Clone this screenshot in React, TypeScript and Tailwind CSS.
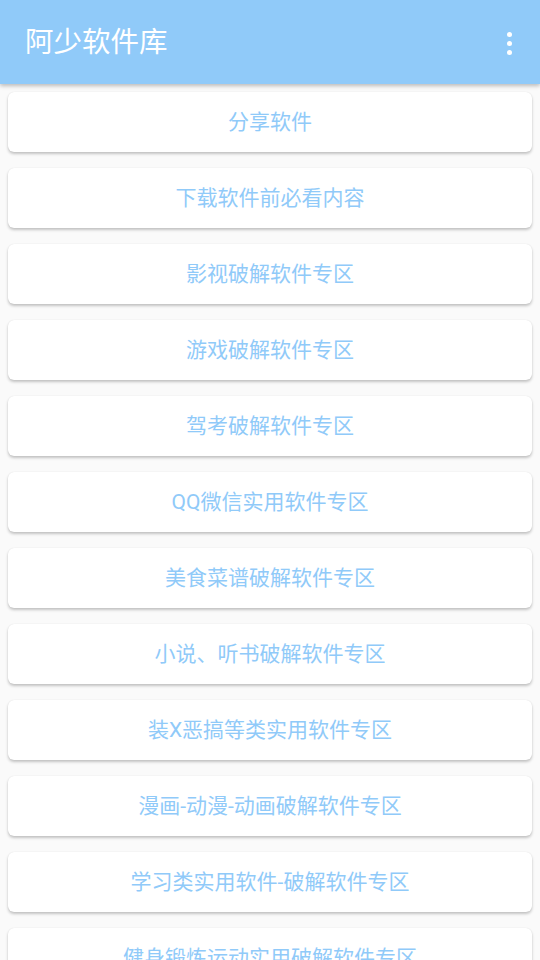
const ITEMS = [
  '分享软件',
  '下载软件前必看内容',
  '影视破解软件专区',
  '游戏破解软件专区',
  '驾考破解软件专区',
  'QQ微信实用软件专区',
  '美食菜谱破解软件专区',
  '小说、听书破解软件专区',
  '装X恶搞等类实用软件专区',
  '漫画-动漫-动画破解软件专区',
  '学习类实用软件-破解软件专区',
  '健身锻炼运动实用破解软件专区',
];

const FONT = "font-['Roboto','Noto_Sans_CJK_SC',sans-serif]";

export default function App() {
  return (
    <div className={`h-[960px] overflow-hidden bg-[#fafafa] ${FONT}`}>
      <header className="relative z-10 flex h-[84px] items-center justify-between bg-[#90caf9] pl-[25px] pr-[28px] pt-[2px] shadow-[0_2px_4px_rgba(0,0,0,0.25)]">
        <h1 className="text-[28.5px] leading-none text-white">阿少软件库</h1>
        <div className="flex flex-col items-center gap-[4px]">
          <span className="h-[5px] w-[5px] rounded-full bg-white" />
          <span className="h-[5px] w-[5px] rounded-full bg-white" />
          <span className="h-[5px] w-[5px] rounded-full bg-white" />
        </div>
      </header>
      <main className="flex flex-col gap-[16px] px-[8px] pt-[8px]">
        {ITEMS.map((item) => (
          <button
            key={item}
            type="button"
            className="flex h-[60px] shrink-0 items-center justify-center rounded-[6px] bg-white pt-[2px] text-[21px] text-[#90caf9] shadow-[0_2px_3px_rgba(0,0,0,0.22),0_0_1px_rgba(0,0,0,0.12)]"
          >
            {item}
          </button>
        ))}
      </main>
    </div>
  );
}
